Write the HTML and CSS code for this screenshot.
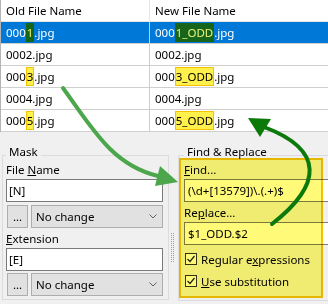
FILE: index.html
```html
<!DOCTYPE html>
<html lang="en">

<head>
    <meta charset="UTF-8">
    <meta name="viewport" content="width=device-width, initial-scale=1.0">
    <title>Rename Files</title>
    <link rel="stylesheet" href="styles.css">
</head>

<body>
    <div class="files">
        <div class="row head">
            <div class="cell">Old File Name</div>
            <div class="cell">New File Name</div>
        </div>
        <div class="row selected">
            <div class="cell">000<span class="hit">1</span>.jpg</div>
            <div class="cell">000<span class="hit">1_ODD</span>.jpg</div>
        </div>
        <div class="row">
            <div class="cell">0002.jpg</div>
            <div class="cell">0002.jpg</div>
        </div>
        <div class="row">
            <div class="cell">000<span class="hit">3</span>.jpg</div>
            <div class="cell">000<span class="hit">3_ODD</span>.jpg</div>
        </div>
        <div class="row">
            <div class="cell">0004.jpg</div>
            <div class="cell">0004.jpg</div>
        </div>
        <div class="row">
            <div class="cell">000<span class="hit">5</span>.jpg</div>
            <div class="cell">000<span class="hit">5_ODD</span>.jpg</div>
        </div>
    </div>

    <div class="panel">
        <div class="group mask">
            <div class="group-title">Mask</div>
            <div class="label">File <u>N</u>ame</div>
            <div class="field">[N]</div>
            <div class="combo-row">
                <div class="btn">...</div>
                <div class="combo">
                    <span>No change</span>
                    <svg width="8" height="5" viewBox="0 0 8 5"><polyline points="0.5,0.5 4,4 7.5,0.5" fill="none" stroke="#606060" stroke-width="1"/></svg>
                </div>
            </div>
            <div class="label second"><u>E</u>xtension</div>
            <div class="field">[E]</div>
            <div class="combo-row last">
                <div class="btn">...</div>
                <div class="combo">
                    <span>No change</span>
                    <svg width="8" height="5" viewBox="0 0 8 5"><polyline points="0.5,0.5 4,4 7.5,0.5" fill="none" stroke="#606060" stroke-width="1"/></svg>
                </div>
            </div>
        </div>

        <div class="splitter"></div>

        <div class="group replace">
            <div class="group-title">Find &amp; Replace</div>
            <div class="label"><u>F</u>ind...</div>
            <div class="field">(\d+[13579])\.(.+)$</div>
            <div class="label second">Re<u>p</u>lace...</div>
            <div class="field">$1_ODD.$2</div>
            <div class="check first">
                <span class="box"><svg width="10" height="10" viewBox="0 0 10 10"><polyline points="1.5,5 4,7.5 8.5,2" fill="none" stroke="#222" stroke-width="1.2"/></svg></span>
                <span>Regular e<u>x</u>pressions</span>
            </div>
            <div class="check">
                <span class="box"><svg width="10" height="10" viewBox="0 0 10 10"><polyline points="1.5,5 4,7.5 8.5,2" fill="none" stroke="#222" stroke-width="1.2"/></svg></span>
                <span><u>U</u>se substitution</span>
            </div>
            <!-- highlight over the find/replace box -->
            <div class="mark"></div>
        </div>
    </div>

    <svg class="arrows" width="328" height="304" viewBox="0 0 328 304">
        <path d="M63 88 C 92 128, 112 165, 158 176" fill="none" stroke="#4ca64c" stroke-width="4" stroke-linecap="round"/>
        <polygon points="178,182 160,166 155,186" fill="#4ca64c"/>
        <path d="M272 224 C 322 185, 325 150, 264 127" fill="none" stroke="#0b7a0b" stroke-width="4" stroke-linecap="round"/>
        <polygon points="248,118 271,119 260,137" fill="#0b7a0b"/>
    </svg>
</body>

</html>
```

FILE: styles.css
```css
body {
    margin: 0;
    width: 328px;
    height: 304px;
    overflow: hidden;
    position: relative;
    background-color: #f0f0f0;
    font-family: "Noto Sans", sans-serif;
    font-size: 11.5px;
    color: #000;
}

/* file list */
.files {
    background-color: white;
    border-left: 1px solid #b4b4b4;
}

.row {
    display: grid;
    grid-template-columns: 149px 1fr;
    height: 22px;
    box-sizing: border-box;
    border-bottom: 1px solid #cfcfcf;
}

.row.head {
    border-bottom-color: #e5e5e5;
}

.cell {
    padding-left: 5px;
    line-height: 21px;
    white-space: nowrap;
    overflow: hidden;
    border-right: 1px solid #cfcfcf;
}

.cell+.cell {
    border-right: none;
}

.head .cell {
    padding-top: 1px;
    line-height: 20px;
    border-right-color: #e5e5e5;
}

.selected {
    background-color: #0078d7;
    color: white;
}

.hit {
    display: inline-block;
    line-height: 17px;
    border: 1px solid #f2c200;
    background-color: #fff04c;
}

.selected .hit {
    background-color: #17651b;
    border-color: #17651b;
    color: #e9f27a;
}

/* bottom panel */
.panel {
    display: flex;
    align-items: flex-start;
    padding-left: 2px;
}

.group {
    position: relative;
    flex-shrink: 0;
    margin-top: 23px;
    border: 1px solid #dcdcdc;
    box-sizing: border-box;
}

.mask {
    width: 167px;
    padding: 0 5px 3px 3px;
}

/* this group runs on past the right edge of the window */
.replace {
    width: 150px;
    border-right: none;
    padding: 0 0 8px 5px;
}

.group-title {
    width: fit-content;
    margin-top: -12px;
    padding: 0 3px;
    line-height: 16px;
    background-color: #f0f0f0;
}

.label {
    margin-top: 2px;
    line-height: 16px;
}

.label.second {
    margin-top: 3px;
}

.field {
    margin-top: 1px;
    height: 23px;
    box-sizing: border-box;
    border: 1px solid #7a7a7a;
    background-color: white;
    padding-left: 2px;
    line-height: 21px;
    white-space: nowrap;
}

.replace .field {
    padding-left: 3px;
    border-right: none;
}

.combo-row {
    display: flex;
    gap: 3px;
    margin: 3px 0 0 1px;
    height: 23px;
}

.combo-row.last {
    margin-top: 2px;
}

.btn,
.combo {
    box-sizing: border-box;
    border: 1px solid #adadad;
    background-color: #e1e1e1;
}

.btn {
    width: 21px;
    text-align: center;
    line-height: 21px;
}

.combo {
    flex: 1;
    display: flex;
    align-items: center;
    justify-content: space-between;
    padding: 0 5px 0 4px;
}

.splitter {
    flex-shrink: 0;
    width: 1px;
    height: 29px;
    margin: 101px 4px 0 2px;
    border-left: 1px dotted #a0a0a0;
    border-right: 1px dotted #a0a0a0;
}

.check {
    display: flex;
    align-items: center;
    gap: 4px;
    height: 22px;
    padding-left: 1px;
}

.check.first {
    margin-top: 3px;
}

.box {
    width: 12px;
    height: 12px;
    box-sizing: border-box;
    border: 1px solid #333;
    background-color: white;
    display: flex;
    align-items: center;
    justify-content: center;
}

.mark {
    position: absolute;
    left: 0;
    top: 2px;
    width: 144px;
    height: 140px;
    box-sizing: border-box;
    border: 2px solid #f3c300;
    background-color: #fffa78;
    mix-blend-mode: multiply;
}

.arrows {
    position: absolute;
    top: 0;
    left: 0;
    pointer-events: none;
}
```
